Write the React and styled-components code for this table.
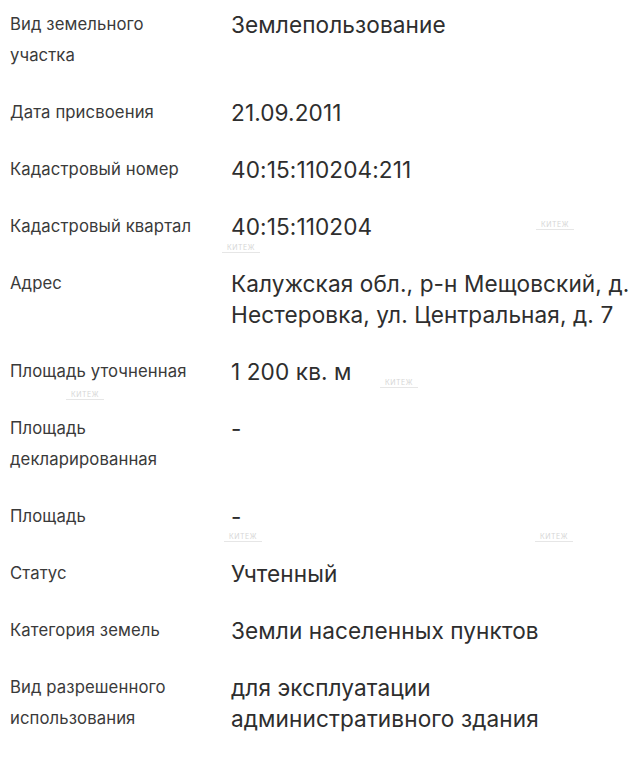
import React from "react";
import styled, { createGlobalStyle } from "styled-components";

const Global = createGlobalStyle`
  html, body { margin: 0; padding: 0; background: #ffffff; }
  body { font-family: Inter, "Noto Sans", "Liberation Sans", sans-serif; -webkit-font-smoothing: antialiased; }
`;

const Page = styled.div`
  position: relative;
  width: 641px;
  min-height: 768px;
  box-sizing: border-box;
  padding: 9px 2px 0 10px;
  background: #fff;
`;

const List = styled.dl`
  margin: 0;
  display: grid;
  grid-template-columns: 195px 1fr;
  column-gap: 26px;
  row-gap: 26px;
`;

const Label = styled.dt`
  margin: 0;
  font-size: 16.7px;
  line-height: 31px;
  color: #3a3a3a;
  letter-spacing: 0.1px;
`;

const Value = styled.dd`
  margin: 0;
  font-size: 22.6px;
  line-height: 31px;
  color: #2e2e2e;
  letter-spacing: 0.1px;
`;

const Mark = styled.span`
  position: absolute;
  font-size: 7px;
  color: #d6d6d6;
  letter-spacing: 0.5px;
  border-bottom: 1px solid #e6e6e6;
  padding: 0 5px;
  pointer-events: none;
`;

const rows = [
  ["Вид земельного участка", "Землепользование"],
  ["Дата присвоения", "21.09.2011"],
  ["Кадастровый номер", "40:15:110204:211"],
  ["Кадастровый квартал", "40:15:110204"],
  ["Адрес", "Калужская обл., р-н Мещовский, д. Нестеровка, ул. Центральная, д. 7"],
  ["Площадь уточненная", "1 200 кв. м"],
  ["Площадь декларированная", "-"],
  ["Площадь", "-"],
  ["Статус", "Учтенный"],
  ["Категория земель", "Земли населенных пунктов"],
  ["Вид разрешенного использования", "для эксплуатации административного здания"],
];

const marks = [
  [536, 220],
  [222, 243],
  [380, 378],
  [66, 390],
  [224, 532],
  [535, 532],
];

export default function App() {
  return (
    <Page>
      <Global />
      <List>
        {rows.map(([k, v]) => (
          <React.Fragment key={k}>
            <Label>{k}</Label>
            <Value>{v}</Value>
          </React.Fragment>
        ))}
      </List>
      {marks.map(([x, y], i) => (
        <Mark key={i} style={{ left: x, top: y }}>КИТЕЖ</Mark>
      ))}
    </Page>
  );
}
